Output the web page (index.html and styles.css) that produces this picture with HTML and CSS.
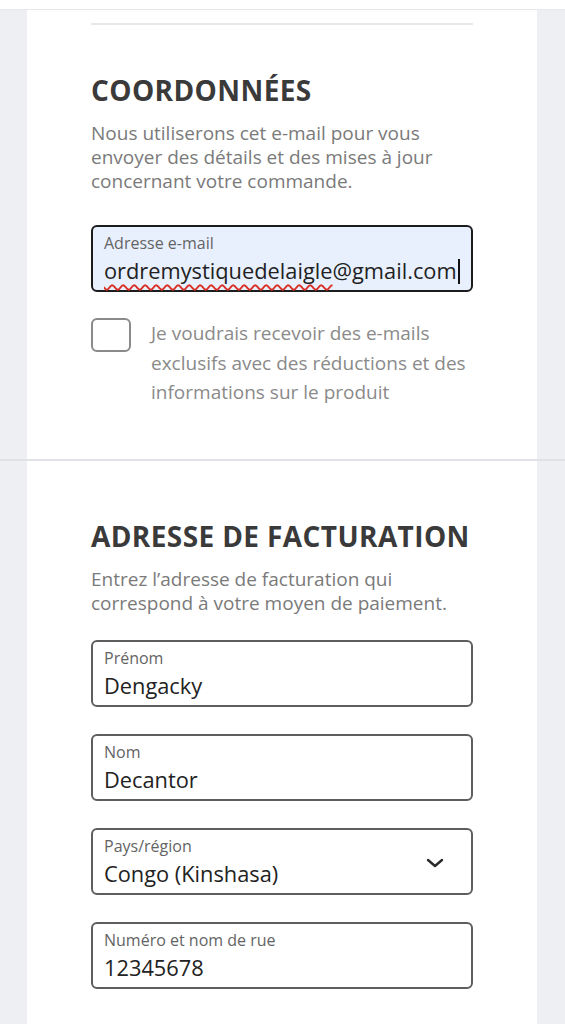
FILE: index.html
```html
<!DOCTYPE html>
<html lang="fr">
<head>
<meta charset="utf-8">
<title>Paiement</title>
<link rel="stylesheet" href="styles.css">
</head>
<body>
<div class="topstrip"></div>
<section class="band">
  <div class="panel panel-first">
    <div class="rule"></div>
    <h2 class="heading">COORDONNÉES</h2>
    <p class="lead">Nous utiliserons cet e-mail pour vous envoyer des détails et des mises à jour concernant votre commande.</p>
    <div class="field field-focus">
      <span class="field-label">Adresse e-mail</span>
      <span class="field-value"><span class="misspelt">ordremystiquedelaigle</span>@gmail.com<span class="caret"></span></span>
    </div>
    <label class="optin">
      <span class="checkbox"></span>
      <span class="optin-text">Je voudrais recevoir des e-mails exclusifs avec des réductions et des informations sur le produit</span>
    </label>
  </div>
</section>
<section class="band band-divided">
  <div class="panel panel-second">
    <h2 class="heading">ADRESSE DE FACTURATION</h2>
    <p class="lead">Entrez l’adresse de facturation qui correspond à votre moyen de paiement.</p>
    <div class="fields">
      <div class="field">
        <span class="field-label">Prénom</span>
        <span class="field-value">Dengacky</span>
      </div>
      <div class="field">
        <span class="field-label">Nom</span>
        <span class="field-value">Decantor</span>
      </div>
      <div class="field field-select">
        <div class="select-text">
          <span class="field-label">Pays/région</span>
          <span class="field-value">Congo (Kinshasa)</span>
        </div>
        <svg class="chevron" width="18" height="10" viewBox="0 0 18 10" aria-hidden="true"><path d="M2 2 L9 8 L16 2" fill="none" stroke="#2a2a2a" stroke-width="2.4" stroke-linecap="round" stroke-linejoin="round"/></svg>
      </div>
      <div class="field">
        <span class="field-label">Numéro et nom de rue</span>
        <span class="field-value">12345678</span>
      </div>
    </div>
  </div>
</section>
</body>
</html>
```
FILE: styles.css
```css
* { box-sizing: border-box; }
html, body { margin: 0; padding: 0; }
body {
  background: #edeff3;
  font-family: "Open Sans", "Noto Sans", sans-serif;
  width: 565px;
  height: 1024px;
  overflow: hidden;
}
.topstrip {
  height: 10px;
  background: #ffffff;
  border-bottom: 1px solid #e6e7ea;
}
.band { width: 100%; }
.band-divided { border-top: 2px solid rgba(0, 0, 0, 0.05); }
.panel {
  margin: 0 28px 0 27px;
  background: #ffffff;
  padding: 0 64px;
}
.panel-first { padding-top: 13px; padding-bottom: 51px; }
.panel-second { padding-top: 57px; padding-bottom: 60px; }
.rule {
  height: 2px;
  background: #e8e8ea;
  margin-bottom: 47px;
}
.heading {
  margin: 0;
  font-size: 28px;
  line-height: 36px;
  font-weight: 700;
  letter-spacing: 0.4px;
  color: #3a3a3a;
  white-space: nowrap;
}
.lead {
  margin: 13px 0 0;
  font-size: 19px;
  line-height: 24px;
  color: #7a7a7a;
}
.field {
  display: flex;
  flex-direction: column;
  height: 67px;
  border: 2px solid #5e5e5e;
  border-radius: 6px;
  padding: 6px 11px 0;
  background: #ffffff;
}
.panel-first .field { margin-top: 32px; }
.field-focus {
  border-color: #1c1c1c;
  background: #e8f0fe;
}
.field-label {
  font-size: 16px;
  line-height: 20px;
  color: #646464;
}
.field-value {
  font-size: 21.8px;
  line-height: 28px;
  margin-top: 4px;
  color: #222222;
  white-space: nowrap;
  display: flex;
  align-items: center;
}
.misspelt {
  text-decoration: underline wavy #d93025;
  text-decoration-thickness: 1.5px;
  text-underline-offset: 5px;
}
.caret {
  display: inline-block;
  width: 2px;
  height: 25px;
  background: #111;
  margin-left: 1px;
}
.optin {
  display: flex;
  gap: 20px;
  margin-top: 26px;
}
.checkbox {
  flex: none;
  width: 40px;
  height: 34px;
  border: 2px solid #8a8a8a;
  border-radius: 6px;
}
.optin-text {
  font-size: 19px;
  line-height: 29.5px;
  color: #8a8a8a;
  margin-top: 1px;
}
.fields {
  display: flex;
  flex-direction: column;
  gap: 27px;
  margin-top: 25px;
}
.field-select {
  flex-direction: row;
  align-items: center;
  justify-content: space-between;
  padding-right: 27px;
}
.select-text {
  display: flex;
  flex-direction: column;
  align-self: flex-start;
}
.chevron { display: block; margin-top: -2px; }
```
